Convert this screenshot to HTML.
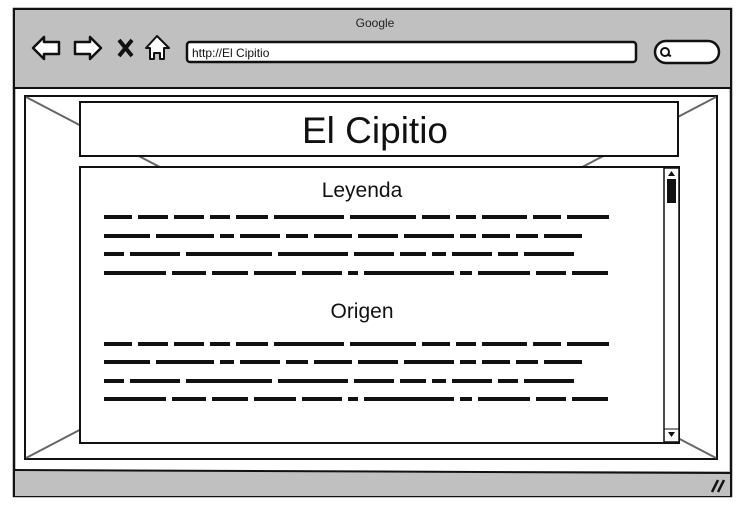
<!DOCTYPE html>
<html><head><meta charset="utf-8"><style>
html,body{margin:0;padding:0;background:#fff;width:744px;height:507px;overflow:hidden}
svg{display:block}
text{font-family:"Liberation Sans",sans-serif}
</style></head><body>
<svg width="744" height="507" viewBox="0 0 744 507" xmlns="http://www.w3.org/2000/svg">
<rect x="14" y="9" width="717" height="487" fill="#fff" stroke="#111" stroke-width="2.5"/>
<rect x="15" y="10" width="715" height="78" fill="#c0c0c0"/>
<line x1="14" y1="88" x2="731" y2="88" stroke="#111" stroke-width="2"/>
<rect x="15" y="471" width="715" height="25" fill="#c0c0c0"/>
<path d="M14 470 L731 473" stroke="#111" stroke-width="2"/>
<text x="375" y="27" font-size="12" text-anchor="middle" fill="#222">Google</text>
<path d="M33 48 L44 37 L44 42 L59 42 L59 54 L44 54 L44 59 Z" fill="#fff" stroke="#111" stroke-width="2.5" stroke-linejoin="round"/>
<path d="M101 48 L90 37 L90 42 L75 42 L75 54 L90 54 L90 59 Z" fill="#fff" stroke="#111" stroke-width="2.5" stroke-linejoin="round"/>
<path d="M119 40 L132 56 M132 40 L119 56" stroke="#111" stroke-width="4"/>
<path d="M146 48 L157 36 L169 48 L164 48 L164 59 L160 59 L160 53 L154 53 L154 59 L150 59 L150 48 Z" fill="#fff" stroke="#111" stroke-width="2" stroke-linejoin="round"/>
<rect x="187" y="42" width="449" height="20" rx="3" fill="#fff" stroke="#111" stroke-width="2.5"/>
<text x="192" y="57" font-size="12" fill="#111">http://El Cipitio</text>
<rect x="655" y="41" width="64" height="22" rx="11" fill="#fff" stroke="#111" stroke-width="2.5"/>
<circle cx="665" cy="52" r="4" fill="none" stroke="#111" stroke-width="2"/>
<line x1="668" y1="55" x2="671" y2="56" stroke="#111" stroke-width="2"/>
<rect x="25" y="96" width="692" height="363" fill="#fff" stroke="#111" stroke-width="2"/>
<path d="M26 97 L716 458 M716 97 L26 458" stroke="#666" stroke-width="2"/>
<rect x="80" y="102" width="598" height="54" fill="#fff" stroke="#111" stroke-width="2"/>
<text x="375" y="143" font-size="37" text-anchor="middle" fill="#111">El Cipitio</text>
<rect x="80" y="167" width="599" height="276" fill="#fff" stroke="#111" stroke-width="2"/>
<rect x="664" y="168" width="15" height="274" fill="#fff" stroke="#111" stroke-width="1.5"/>
<path d="M668 176 L675 176 L671.5 171 Z" fill="#111"/>
<rect x="667" y="179" width="9" height="24" fill="#111"/>
<path d="M668 432 L675 432 L671.5 437 Z" fill="#111"/>
<line x1="664" y1="429" x2="679" y2="429" stroke="#111"/>
<text x="362" y="197" font-size="21" text-anchor="middle" fill="#111">Leyenda</text>
<text x="362" y="318" font-size="21" text-anchor="middle" fill="#111">Origen</text>
<g stroke="#111" stroke-width="4" fill="none">
<path d="M104 217 H615" stroke-dasharray="28 6 30 6 30 6 20 6 32 6 70 6 66 6 28 6 20 6 45 6 28 6 42 200"/>
<path d="M104 236 H582" stroke-dasharray="46 6 58 6 14 6 40 6 22 6 38 6 40 6 50 6 16 6 28 6 22 6 38 200"/>
<path d="M104 254 H574" stroke-dasharray="20 6 50 6 86 6 70 6 40 6 26 6 14 6 40 6 20 6 50 200"/>
<path d="M104 273 H608" stroke-dasharray="62 6 34 6 36 6 42 6 40 6 10 6 90 6 12 6 52 6 30 6 36 200"/>
<path d="M104 344 H615" stroke-dasharray="28 6 30 6 30 6 20 6 32 6 70 6 66 6 28 6 20 6 45 6 28 6 42 200"/>
<path d="M104 362 H582" stroke-dasharray="46 6 58 6 14 6 40 6 22 6 38 6 40 6 50 6 16 6 28 6 22 6 38 200"/>
<path d="M104 381 H574" stroke-dasharray="20 6 50 6 86 6 70 6 40 6 26 6 14 6 40 6 20 6 50 200"/>
<path d="M104 399 H608" stroke-dasharray="62 6 34 6 36 6 42 6 40 6 10 6 90 6 12 6 52 6 30 6 36 200"/>
</g>
<path d="M712 492 L718 480 M718 492 L724 480" stroke="#111" stroke-width="2.5"/>
</svg>
</body></html>
